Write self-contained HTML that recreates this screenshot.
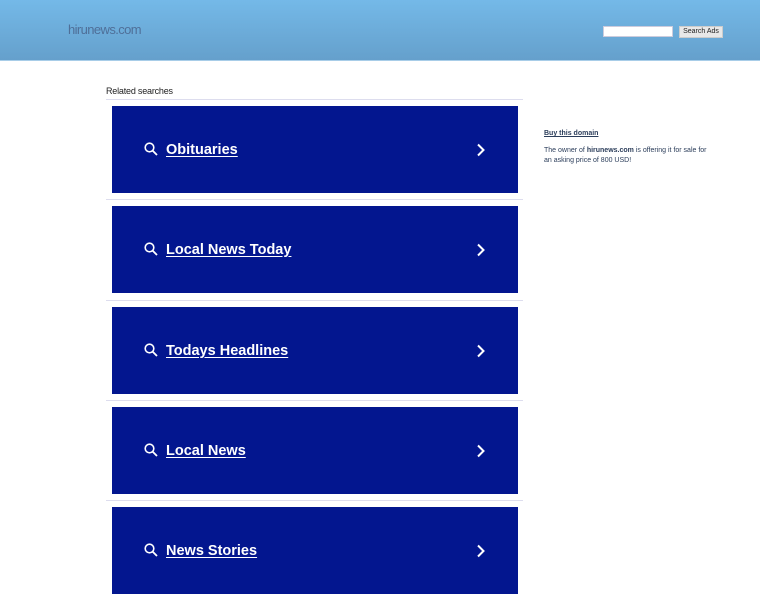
<!DOCTYPE html>
<html><head><style>
body{margin:0;width:760px;height:600px;overflow:hidden;background:#fff;font-family:"Liberation Sans",sans-serif;position:relative}
.hd{position:absolute;left:0;top:0;width:760px;height:60px;background:linear-gradient(#74b9e8,#65a0cc);border-bottom:1px solid #a8cde8}
.logo{position:absolute;left:68px;top:22px;font-size:13px;color:#4f6f98;letter-spacing:-0.6px}
.inp{position:absolute;left:603px;top:26px;width:68px;height:9px;background:#fff;border:1px solid #ccd}
.btn{position:absolute;left:679px;top:26px;width:42px;height:10px;background:#e8e8e8;border:1px solid #ccc;font-size:7px;line-height:10px;text-align:center;color:#222}
.rs{position:absolute;left:106px;top:86px;font-size:9px;color:#222;letter-spacing:-0.2px}
.ln{position:absolute;left:106px;width:417px;height:1px;background:#dde}
.box{position:absolute;left:112px;width:406px;height:87px;background:#03168f}
.box .t{position:absolute;left:54px;top:36px;color:#fff;font:bold 14.5px "Liberation Sans",sans-serif;letter-spacing:0;text-decoration:underline;text-underline-offset:2px}
.box svg.s{position:absolute;left:32px;top:36px}
.box svg.a{position:absolute;left:364px;top:37px}
.side{position:absolute;left:544px;top:129px;font-size:7px;color:#2b3d5a;width:172px;line-height:10.5px}
</style></head><body>
<div class="hd"><div class="logo">hirunews.com</div><div class="inp"></div><div class="btn">Search Ads</div></div>
<div class="rs">Related searches</div>
<div class="ln" style="top:99px"></div>
<div class="box" style="top:106px"><svg class="s" width="14" height="14" viewBox="0 0 14 14"><circle cx="5.5" cy="5.5" r="4.3" fill="none" stroke="#fff" stroke-width="1.6"/><path d="M8.6 8.6L13 13" stroke="#fff" stroke-width="1.8"/></svg><span class="t">Obituaries</span><svg class="a" width="10" height="14" viewBox="0 0 10 14"><path d="M2 1.5L7.5 7L2 12.5" fill="none" stroke="#fff" stroke-width="2"/></svg></div>
<div class="ln" style="top:199px"></div>
<div class="box" style="top:206px"><svg class="s" width="14" height="14" viewBox="0 0 14 14"><circle cx="5.5" cy="5.5" r="4.3" fill="none" stroke="#fff" stroke-width="1.6"/><path d="M8.6 8.6L13 13" stroke="#fff" stroke-width="1.8"/></svg><span class="t">Local News Today</span><svg class="a" width="10" height="14" viewBox="0 0 10 14"><path d="M2 1.5L7.5 7L2 12.5" fill="none" stroke="#fff" stroke-width="2"/></svg></div>
<div class="ln" style="top:300px"></div>
<div class="box" style="top:307px"><svg class="s" width="14" height="14" viewBox="0 0 14 14"><circle cx="5.5" cy="5.5" r="4.3" fill="none" stroke="#fff" stroke-width="1.6"/><path d="M8.6 8.6L13 13" stroke="#fff" stroke-width="1.8"/></svg><span class="t">Todays Headlines</span><svg class="a" width="10" height="14" viewBox="0 0 10 14"><path d="M2 1.5L7.5 7L2 12.5" fill="none" stroke="#fff" stroke-width="2"/></svg></div>
<div class="ln" style="top:400px"></div>
<div class="box" style="top:407px"><svg class="s" width="14" height="14" viewBox="0 0 14 14"><circle cx="5.5" cy="5.5" r="4.3" fill="none" stroke="#fff" stroke-width="1.6"/><path d="M8.6 8.6L13 13" stroke="#fff" stroke-width="1.8"/></svg><span class="t">Local News</span><svg class="a" width="10" height="14" viewBox="0 0 10 14"><path d="M2 1.5L7.5 7L2 12.5" fill="none" stroke="#fff" stroke-width="2"/></svg></div>
<div class="ln" style="top:500px"></div>
<div class="box" style="top:507px"><svg class="s" width="14" height="14" viewBox="0 0 14 14"><circle cx="5.5" cy="5.5" r="4.3" fill="none" stroke="#fff" stroke-width="1.6"/><path d="M8.6 8.6L13 13" stroke="#fff" stroke-width="1.8"/></svg><span class="t">News Stories</span><svg class="a" width="10" height="14" viewBox="0 0 10 14"><path d="M2 1.5L7.5 7L2 12.5" fill="none" stroke="#fff" stroke-width="2"/></svg></div>
<div class="side"><b style="text-decoration:underline">Buy this domain</b><div style="margin-top:6px">The owner of <b>hirunews.com</b> is offering it for sale for an asking price of 800 USD!</div></div>
</body></html>
